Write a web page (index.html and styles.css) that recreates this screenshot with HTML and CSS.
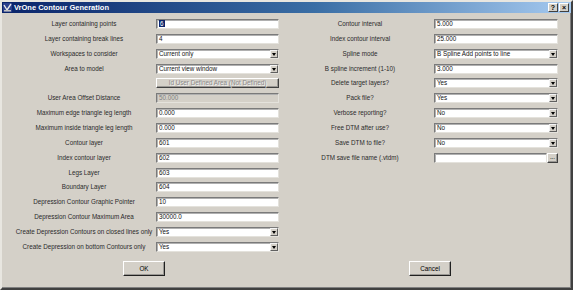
FILE: index.html
```html
<!DOCTYPE html>
<html lang="en">
<head>
  <meta charset="UTF-8">
  <title>VrOne Contour Generation</title>
  <link rel="stylesheet" href="styles.css">
</head>
<body>
  <div class="window">
    <div class="titlebar">
      <svg class="app-icon" width="9" height="9" viewBox="0 0 9 9">
        <rect x="0" y="0" width="9" height="9" fill="#2a3f8c"/>
        <path d="M1 2 L4 7 L8 1" stroke="#e8e8e8" stroke-width="1.4" fill="none"/>
        <rect x="1" y="7" width="7" height="1.5" fill="#c0c0c0"/>
      </svg>
      <span class="title">VrOne Contour Generation</span>
      <div class="caption-btns">
        <span class="cap-btn">?</span>
        <span class="cap-btn cap-close">&#215;</span>
      </div>
    </div>

    <div class="content">
      <div class="panel panel-left">
        <label>Layer containing points</label>
        <div class="field"><span class="sel">6</span></div>

        <label>Layer containing break lines</label>
        <div class="field">4</div>

        <label>Workspaces to consider</label>
        <div class="field combo">Current only<span class="arrow"></span></div>

        <label>Area to model</label>
        <div class="field combo">Current view window<span class="arrow"></span></div>

        <span></span>
        <div class="button button-wide disabled">Id User Defined Area (Not Defined)</div>

        <label>User Area Offset Distance</label>
        <div class="field disabled">50.000</div>

        <label>Maximum edge triangle leg length</label>
        <div class="field">0.000</div>

        <label>Maximum inside triangle leg length</label>
        <div class="field">0.000</div>

        <label>Contour layer</label>
        <div class="field">601</div>

        <label>Index contour layer</label>
        <div class="field">602</div>

        <label>Legs Layer</label>
        <div class="field">603</div>

        <label>Boundary Layer</label>
        <div class="field">604</div>

        <label>Depression Contour Graphic Pointer</label>
        <div class="field">10</div>

        <label>Depression Contour Maximum Area</label>
        <div class="field">30000.0</div>

        <label>Create Depression Contours on closed lines only</label>
        <div class="field combo">Yes<span class="arrow"></span></div>

        <label>Create Depression on bottom Contours only</label>
        <div class="field combo">Yes<span class="arrow"></span></div>
      </div>

      <div class="panel panel-right">
        <label>Contour interval</label>
        <div class="field">5.000</div>

        <label>Index contour interval</label>
        <div class="field">25.000</div>

        <label>Spline mode</label>
        <div class="field combo">B Spline Add points to line<span class="arrow"></span></div>

        <label>B spline increment (1-10)</label>
        <div class="field">3.000</div>

        <label>Delete target layers?</label>
        <div class="field combo">Yes<span class="arrow"></span></div>

        <label>Pack file?</label>
        <div class="field combo">Yes<span class="arrow"></span></div>

        <label>Verbose reporting?</label>
        <div class="field combo">No<span class="arrow"></span></div>

        <label>Free DTM after use?</label>
        <div class="field combo">No<span class="arrow"></span></div>

        <label>Save DTM to file?</label>
        <div class="field combo">No<span class="arrow"></span></div>

        <label>DTM save file name (.vtdm)</label>
        <div class="file-row">
          <div class="field"></div>
          <div class="button browse">...</div>
        </div>
      </div>
    </div>

    <div class="actions">
      <div class="button button-action">OK</div>
      <div class="button button-action">Cancel</div>
    </div>
  </div>
</body>
</html>
```

FILE: styles.css
```css
body {
  margin: 0;
  background-color: #ffffff;
  font-family: 'Liberation Sans', Arial, sans-serif;
  font-size: 6.3px;
  color: #2a2a2a;
}
.window {
  width: 573px;
  height: 290px;
  box-sizing: border-box;
  background-color: #d4d0c8;
  border: 2px solid;
  border-color: #e8e6e0 #404040 #404040 #e8e6e0;
  box-shadow: inset -1px -1px 0 #808080;
}
.titlebar {
  height: 11px;
  display: flex;
  align-items: center;
  padding: 0 2px 0 1px;
  background: linear-gradient(to right, #0a246a, #3a6ea5 55%, #a6caf0);
}
.app-icon {
  margin-right: 2px;
}
.title {
  color: #fff;
  font-weight: bold;
  font-size: 7.5px;
}
.caption-btns {
  margin-left: auto;
  display: flex;
  gap: 1px;
}
.cap-btn {
  width: 8px;
  height: 7px;
  line-height: 7px;
  text-align: center;
  font-size: 7px;
  font-weight: bold;
  color: #000;
  background-color: #d4d0c8;
  border: 1px solid;
  border-color: #fff #404040 #404040 #fff;
}
.content {
  display: flex;
  padding-top: 6px;
}
.panel {
  display: grid;
  grid-auto-rows: 10px;
  row-gap: 4.87px;
  align-items: center;
}
.panel-left {
  margin-left: 10px;
  grid-template-columns: 144px 123px;
}
.panel-right {
  margin-left: 13px;
  grid-template-columns: 136px 124px;
  column-gap: 6px;
}
label {
  text-align: center;
  white-space: nowrap;
  line-height: 10px;
}
.field {
  position: relative;
  height: 10px;
  box-sizing: border-box;
  background-color: #fff;
  border: 1px solid;
  border-color: #7a7a7a #e4e2dc #e4e2dc #7a7a7a;
  box-shadow: inset 1px 1px 0 #b0b0b0;
  padding-left: 2px;
  line-height: 8px;
  color: #111;
  white-space: nowrap;
  overflow: hidden;
}
.field.disabled {
  background-color: #d4d0c8;
  color: #808080;
}
.sel {
  background-color: #0a246a;
  color: #fff;
  padding: 0 1px;
}
.arrow {
  position: absolute;
  right: 0;
  top: 0;
  width: 8px;
  height: 8px;
  box-sizing: border-box;
  background-color: #d4d0c8;
  border: 1px solid;
  border-color: #f4f4f4 #606060 #606060 #f4f4f4;
}
.arrow::after {
  content: "";
  position: absolute;
  left: 1px;
  top: 2px;
  border-left: 2.5px solid transparent;
  border-right: 2.5px solid transparent;
  border-top: 3px solid #000;
}
.button {
  box-sizing: border-box;
  background-color: #d4d0c8;
  border: 1px solid;
  border-color: #fff #404040 #404040 #fff;
  box-shadow: inset -1px -1px 0 #9a9894;
  text-align: center;
  color: #000;
  white-space: nowrap;
}
.button-wide {
  height: 10px;
  line-height: 8px;
}
.button.disabled {
  color: #8a8a8a;
  text-shadow: 1px 1px 0 #f4f4f4;
}
.file-row {
  display: flex;
  height: 10px;
}
.file-row .field {
  width: 113px;
}
.browse {
  width: 11px;
  height: 10px;
  line-height: 6px;
}
.actions {
  display: flex;
  gap: 244px;
  padding: 9px 0 0 121px;
}
.button-action {
  width: 42px;
  height: 15px;
  line-height: 13px;
  border-color: #fff #202020 #202020 #fff;
}
```
